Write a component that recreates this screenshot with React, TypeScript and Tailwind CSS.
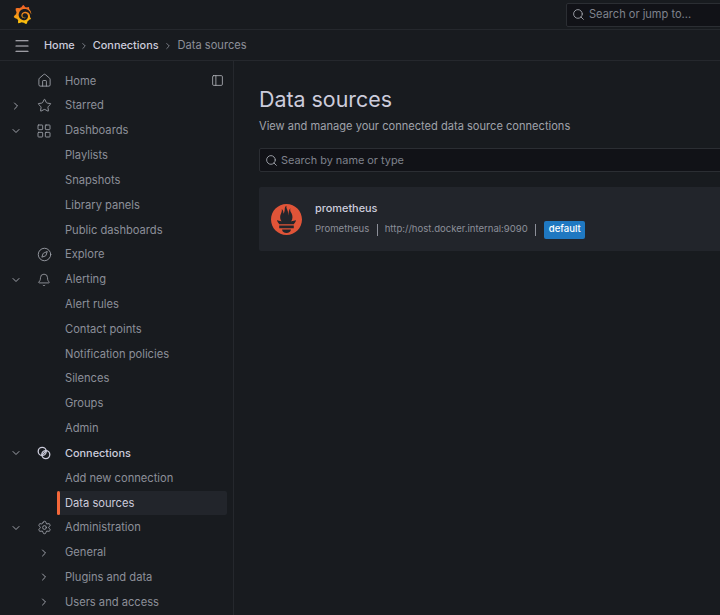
import { Bell, ChevronDown, ChevronRight, Compass, Home, LayoutGrid, Menu, PanelLeft, Search, Settings, Star } from "lucide-react"
import type { ReactNode } from "react"
import { SiGrafana, SiPrometheus } from "react-icons/si"

function ConnectionsIcon() {
  return (
    <svg viewBox="0 0 14 14" className="h-[14px] w-[14px] text-[#ccccdc]" fill="none" stroke="currentColor" strokeWidth="1.3">
      <circle cx="5.2" cy="5.4" r="4" />
      <circle cx="8.8" cy="8.6" r="4" />
      <path d="M5 9 L9 5" />
    </svg>
  )
}

type NavRow = {
  label: string
  icon?: ReactNode
  caret?: "right" | "down"
  subCaret?: boolean
  sub?: boolean
  active?: boolean
  bright?: boolean
  action?: boolean
}

const iconClass = "h-[15px] w-[15px]"

const rows: NavRow[] = [
  { label: "Home", icon: <Home className={iconClass} strokeWidth={1.4} />, action: true },
  { label: "Starred", icon: <Star className={iconClass} strokeWidth={1.4} />, caret: "right" },
  { label: "Dashboards", icon: <LayoutGrid className="h-[16px] w-[16px]" strokeWidth={1.3} />, caret: "down" },
  { label: "Playlists", sub: true },
  { label: "Snapshots", sub: true },
  { label: "Library panels", sub: true },
  { label: "Public dashboards", sub: true },
  { label: "Explore", icon: <Compass className={iconClass} strokeWidth={1.4} /> },
  { label: "Alerting", icon: <Bell className="h-[14px] w-[14px]" strokeWidth={1.4} />, caret: "down" },
  { label: "Alert rules", sub: true },
  { label: "Contact points", sub: true },
  { label: "Notification policies", sub: true },
  { label: "Silences", sub: true },
  { label: "Groups", sub: true },
  { label: "Admin", sub: true },
  { label: "Connections", icon: <ConnectionsIcon />, caret: "down", bright: true },
  { label: "Add new connection", sub: true },
  { label: "Data sources", sub: true, active: true },
  { label: "Administration", icon: <Settings className={iconClass} strokeWidth={1.4} />, caret: "down" },
  { label: "General", subCaret: true },
  { label: "Plugins and data", subCaret: true },
  { label: "Users and access", subCaret: true },
]

function SideRow({ row }: { row: NavRow }) {
  const textColor = row.active || row.bright ? "text-[#ccccdc]" : "text-[#8c8f99]"
  return (
    <div className="flex h-[24.83px] items-center text-[#a0a3ab]">
      <div className="flex w-[31px] shrink-0 justify-center">
        {row.caret === "right" && <ChevronRight className="h-3 w-3" strokeWidth={2} />}
        {row.caret === "down" && <ChevronDown className="h-3 w-3" strokeWidth={2} />}
      </div>
      <div className="flex w-[26px] shrink-0 justify-center">
        {row.icon}
        {row.subCaret && <ChevronRight className="h-3 w-3" strokeWidth={2} />}
      </div>
      <div
        className={`relative flex h-full w-[170px] shrink-0 items-center justify-between pl-2 text-[11.15px] ${textColor} ${
          row.active ? "rounded-r-[2px] bg-[#22252b]" : ""
        }`}
      >
        {row.active && <span className="absolute left-0 top-0 h-full w-[3px] rounded-[2px] bg-[#f4683a]" />}
        <span className={row.bright ? "text-[10.9px] font-medium" : ""}>{row.label}</span>
        {row.action && <PanelLeft className="mr-[3px] h-[13px] w-[13px] text-[#b4b6bd]" strokeWidth={1.5} />}
      </div>
    </div>
  )
}

export default function App() {
  return (
    <div className="flex h-[615px] w-[720px] flex-col overflow-hidden bg-[#181b1f] font-['Inter',sans-serif] text-[#ccccdc]">
      <svg width="0" height="0" className="absolute">
        <defs>
          <linearGradient id="grafanaFlame" x1="0" y1="1" x2="0" y2="0">
            <stop offset="0" stopColor="#fbca0a" />
            <stop offset="1" stopColor="#f05a28" />
          </linearGradient>
        </defs>
      </svg>

      <header className="flex h-[30px] shrink-0 items-center justify-between border-b border-[#25282d] pl-[13px]">
        <SiGrafana className="h-[19px] w-[19px]" fill="url(#grafanaFlame)" />
        <div className="flex h-[24px] w-[180px] shrink-0 translate-x-[26px] items-center gap-[4px] rounded-[2px] border border-[#2b2e33] bg-[#111217] pl-[5px] text-[11.05px] text-[#7f828c]">
          <Search className="h-[13px] w-[13px] text-[#a0a3ab]" strokeWidth={1.7} />
          <span>Search or jump to...</span>
        </div>
      </header>

      <div className="flex h-[31px] shrink-0 items-center border-b border-[#25282d] pl-[13px] pt-px text-[11.1px]">
        <Menu className="mr-[13px] h-[18px] w-[18px] text-[#c7c8d0]" strokeWidth={1.6} />
        <span className="text-[10.9px] font-medium text-[#ccccdc]">Home</span>
        <ChevronRight className="mx-[4px] h-[10px] w-[10px] text-[#8c8f99]" strokeWidth={2} />
        <span className="text-[10.9px] font-medium text-[#ccccdc]">Connections</span>
        <ChevronRight className="mx-[4.5px] h-[10px] w-[10px] text-[#8c8f99]" strokeWidth={2} />
        <span className="text-[#8c8f99]">Data sources</span>
      </div>

      <div className="flex min-h-0 flex-1">
        <aside className="w-[234px] shrink-0 overflow-hidden border-r border-[#25282d] pt-[7.5px]">
          {rows.map((row) => (
            <SideRow key={row.label} row={row} />
          ))}
        </aside>

        <main className="min-w-0 flex-1 overflow-hidden pl-[25px] pt-[24px]">
          <h1 className="text-[21.4px] leading-[28px] text-[#ccccdc]">Data sources</h1>
          <p className="mt-[5px] text-[11.1px] leading-[16px] text-[#a0a3ab]">View and manage your connected data source connections</p>

          <div className="mt-[14px] flex h-[24px] w-[520px] items-center gap-[3px] rounded-[2px] border border-[#2b2e33] bg-[#111217] pl-[5px] text-[10.9px] text-[#7f828c]">
            <Search className="h-[13px] w-[13px] text-[#a0a3ab]" strokeWidth={1.7} />
            <span>Search by name or type</span>
          </div>

          <div className="mt-[15px] flex h-[64px] w-[520px] items-center rounded-[2px] bg-[#22252b] pl-[12px]">
            <SiPrometheus className="h-[31px] w-[31px] text-[#e05438]" />
            <div className="ml-[13px]">
              <div className="text-[10.9px] font-medium leading-[16px] text-[#ccccdc]">prometheus</div>
              <div className="mt-[5px] flex items-center text-[9.55px] text-[#8c8f99]">
                <span>Prometheus</span>
                <span className="ml-[7.5px] mr-[7px] h-[12px] w-px bg-[#8c8f99]" />
                <span>http://host.docker.internal:9090</span>
                <span className="ml-[7px] mr-[8.5px] h-[12px] w-px bg-[#8c8f99]" />
                <span className="flex h-[18px] items-center rounded-[2px] bg-[#1f78c1] px-[4.5px] font-medium text-white">default</span>
              </div>
            </div>
          </div>
        </main>
      </div>
    </div>
  )
}
